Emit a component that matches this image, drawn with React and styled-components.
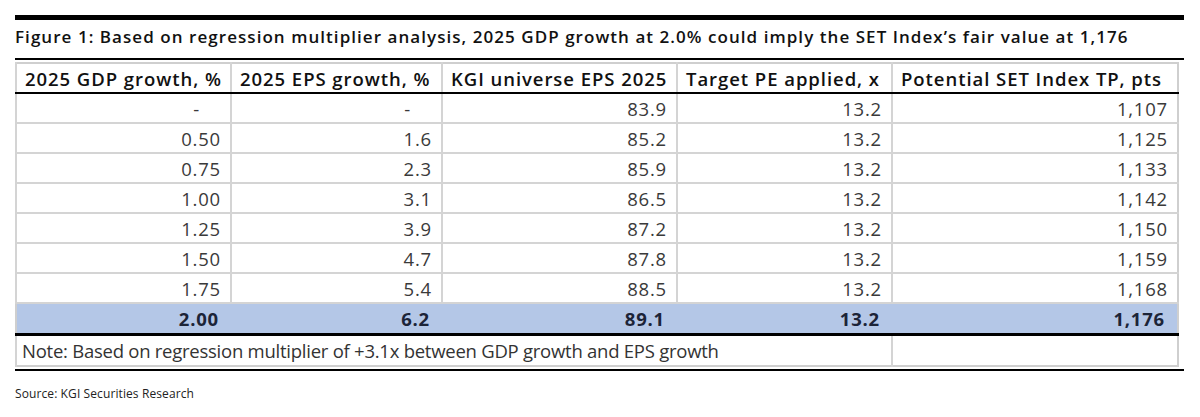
import React from 'react'
import styled, { createGlobalStyle } from 'styled-components'

const rows = [
    ['-', '-', '83.9', '13.2', '1,107'],
    ['0.50', '1.6', '85.2', '13.2', '1,125'],
    ['0.75', '2.3', '85.9', '13.2', '1,133'],
    ['1.00', '3.1', '86.5', '13.2', '1,142'],
    ['1.25', '3.9', '87.2', '13.2', '1,150'],
    ['1.50', '4.7', '87.8', '13.2', '1,159'],
    ['1.75', '5.4', '88.5', '13.2', '1,168'],
]
const total = ['2.00', '6.2', '89.1', '13.2', '1,176']
const headers = [
    '2025 GDP growth, %',
    '2025 EPS growth, %',
    'KGI universe EPS 2025',
    'Target PE applied, x',
    'Potential SET Index TP, pts',
]
const widths = [215, 211, 235, 215, 286]

const App = () => {
    return (
        <Page>
            <GlobalStyle />
            <TopBar />
            <Title>Figure 1: Based on regression multiplier analysis, 2025 GDP growth at 2.0% could imply the SET Index’s fair value at 1,176</Title>
            <Rule />
            <Table>
                <colgroup>
                    {widths.map((w, i) => <col key={i} style={{ width: w }} />)}
                </colgroup>
                <thead>
                    <tr>
                        {headers.map(h => <Th key={h}>{h}</Th>)}
                    </tr>
                </thead>
                <tbody>
                    {rows.map((r, i) => (
                        <tr key={i}>
                            {r.map((c, j) => <Td key={j} $dash={c === '-'}>{c}</Td>)}
                        </tr>
                    ))}
                    <tr>
                        {total.map((c, j) => <TotalTd key={j}>{c}</TotalTd>)}
                    </tr>
                    <tr>
                        <NoteTd colSpan={4}>Note: Based on regression multiplier of +3.1x between GDP growth and EPS growth</NoteTd>
                        <NoteTd />
                    </tr>
                </tbody>
            </Table>
            <BottomRule />
            <Source>Source: KGI Securities Research</Source>
        </Page>
    )
}

export default App

const GlobalStyle = createGlobalStyle`
    body {
        margin: 0;
        background: #ffffff;
        font-family: "Open Sans", "Liberation Sans", sans-serif;
    }
`
const Page = styled.div`
    width: 1169px;
    padding: 15px 0 0 15px;
`
const TopBar = styled.div`
    height: 5px;
    background: #000;
`
const Title = styled.div`
    height: 38px;
    line-height: 34px;
    font-size: 17px;
    font-weight: 600;
    color: #111;
    white-space: nowrap;
    letter-spacing: 1.05px;
`
const Rule = styled.div`
    height: 2px;
    background: #000;
    margin-bottom: 2px;
`
const Table = styled.table`
    width: 1162px;
    border-collapse: collapse;
    table-layout: fixed;
    border: 2px solid #cfcfcf;
    font-size: 18.5px;
`
const Th = styled.th`
    height: 28px;
    padding: 0 0 0 8px;
    text-align: left;
    font-weight: 600;
    color: #111;
    white-space: nowrap;
    border-left: 2px solid #d4d4d4;
    border-bottom: 2px solid #000;
    letter-spacing: 0.95px;
`
const Td = styled.td`
    height: 28px;
    padding: 0 ${p => (p.$dash ? '30px' : '9px')} 0 0;
    text-align: right;
    color: #3a3a3a;
    letter-spacing: 0.8px;
    border-left: 2px solid #d4d4d4;
    border-bottom: 2px solid #d4d4d4;
`
const TotalTd = styled.td`
    height: 29px;
    padding: 0 12px 0 0;
    text-align: right;
    font-weight: 700;
    color: #1c2438;
    letter-spacing: 0.8px;
    background: #b4c7e7;
    border-bottom: 3px solid #000;
`
const NoteTd = styled.td`
    height: 29px;
    padding: 0 0 0 5px;
    color: #333;
    white-space: nowrap;
    border-left: 2px solid #d4d4d4;
    letter-spacing: -0.25px;
`
const BottomRule = styled.div`
    height: 1.5px;
    background: #000;
    margin-top: 2px;
`
const Source = styled.div`
    margin-top: 14px;
    font-size: 12px;
    color: #222;
    letter-spacing: 0.1px;
`
